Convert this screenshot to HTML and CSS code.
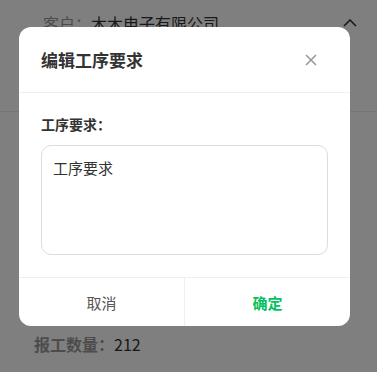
FILE: index.html
```html
<!DOCTYPE html>
<html lang="zh">
<head>
<meta charset="utf-8">
<link rel="stylesheet" href="styles.css">
</head>
<body>
<div class="page">
  <div class="card">
    <div class="card-row">
      <span class="lbl">客户：</span><span class="val">木木电子有限公司</span>
      <svg class="chev" width="14" height="8" viewBox="0 0 14 8"><path d="M1 7 L7 1 L13 7" fill="none" stroke="#333" stroke-width="1.6"/></svg>
    </div>
  </div>
  <div class="spacer"></div>
  <div class="qty"><span class="qlbl">报工数量：</span><span class="qval">212</span></div>
</div>
<div class="mask"></div>
<div class="dialog">
  <div class="dlg-head">
    <span class="dlg-title">编辑工序要求</span>
    <svg class="close" width="12" height="12" viewBox="0 0 12 12"><path d="M1 1 L11 11 M11 1 L1 11" stroke="#999" stroke-width="1.6"/></svg>
  </div>
  <div class="dlg-body">
    <div class="field-lbl">工序要求：</div>
    <div class="area">工序要求</div>
  </div>
  <div class="dlg-foot">
    <div class="btn cancel">取消</div>
    <div class="btn ok">确定</div>
  </div>
</div>
</body>
</html>
```
FILE: styles.css
```css
* { box-sizing: border-box; }
html, body { margin: 0; padding: 0; }
body {
  width: 377px; height: 372px; overflow: hidden; position: relative;
  font-family: "Noto Sans CJK SC", "Noto Sans", sans-serif;
  background: #fff;
}
.page { display: flex; flex-direction: column; height: 372px; }
.card { height: 112px; border-bottom: 1px solid #ebebeb; background: #fff; }
.card-row {
  display: flex; align-items: center; height: 46px; padding: 0 0 0 43px; font-size: 16px;
}
.lbl { color: #999; }
.val { color: #333; }
.chev { margin-left: auto; margin-right: 20px; }
.spacer { flex: 1; }
.qty { height: 50px; padding: 10px 0 0 34px; font-size: 16px; }
.qlbl { color: #999; font-weight: bold; }
.qval { color: #333; }
.mask { position: absolute; inset: 0; background: rgba(0,0,0,0.5); }
.dialog {
  position: absolute; left: 19px; top: 27px; width: 331px;
  background: #fff; border-radius: 12px; overflow: hidden;
  display: flex; flex-direction: column;
}
.dlg-head {
  height: 66px; display: flex; align-items: center; padding: 0 33px 0 22px;
  border-bottom: 1px solid #efefef;
}
.dlg-title { font-size: 17px; font-weight: bold; color: #333; }
.close { margin-left: auto; }
.dlg-body { padding: 21px 22px 22px; }
.field-lbl { font-size: 14px; font-weight: bold; color: #333; line-height: 20px; margin-bottom: 11px; }
.area {
  height: 110px; border: 1px solid #dcdcdc; border-radius: 10px;
  padding: 11px 11px; font-size: 15px; line-height: 22px; color: #333;
}
.dlg-foot { display: flex; height: 49px; border-top: 1px solid #efefef; }
.btn { flex: 1; display: flex; align-items: center; justify-content: center; font-size: 15px; }
.cancel { color: #555; border-right: 1px solid #efefef; }
.ok { color: #07c160; font-weight: bold; }
```
